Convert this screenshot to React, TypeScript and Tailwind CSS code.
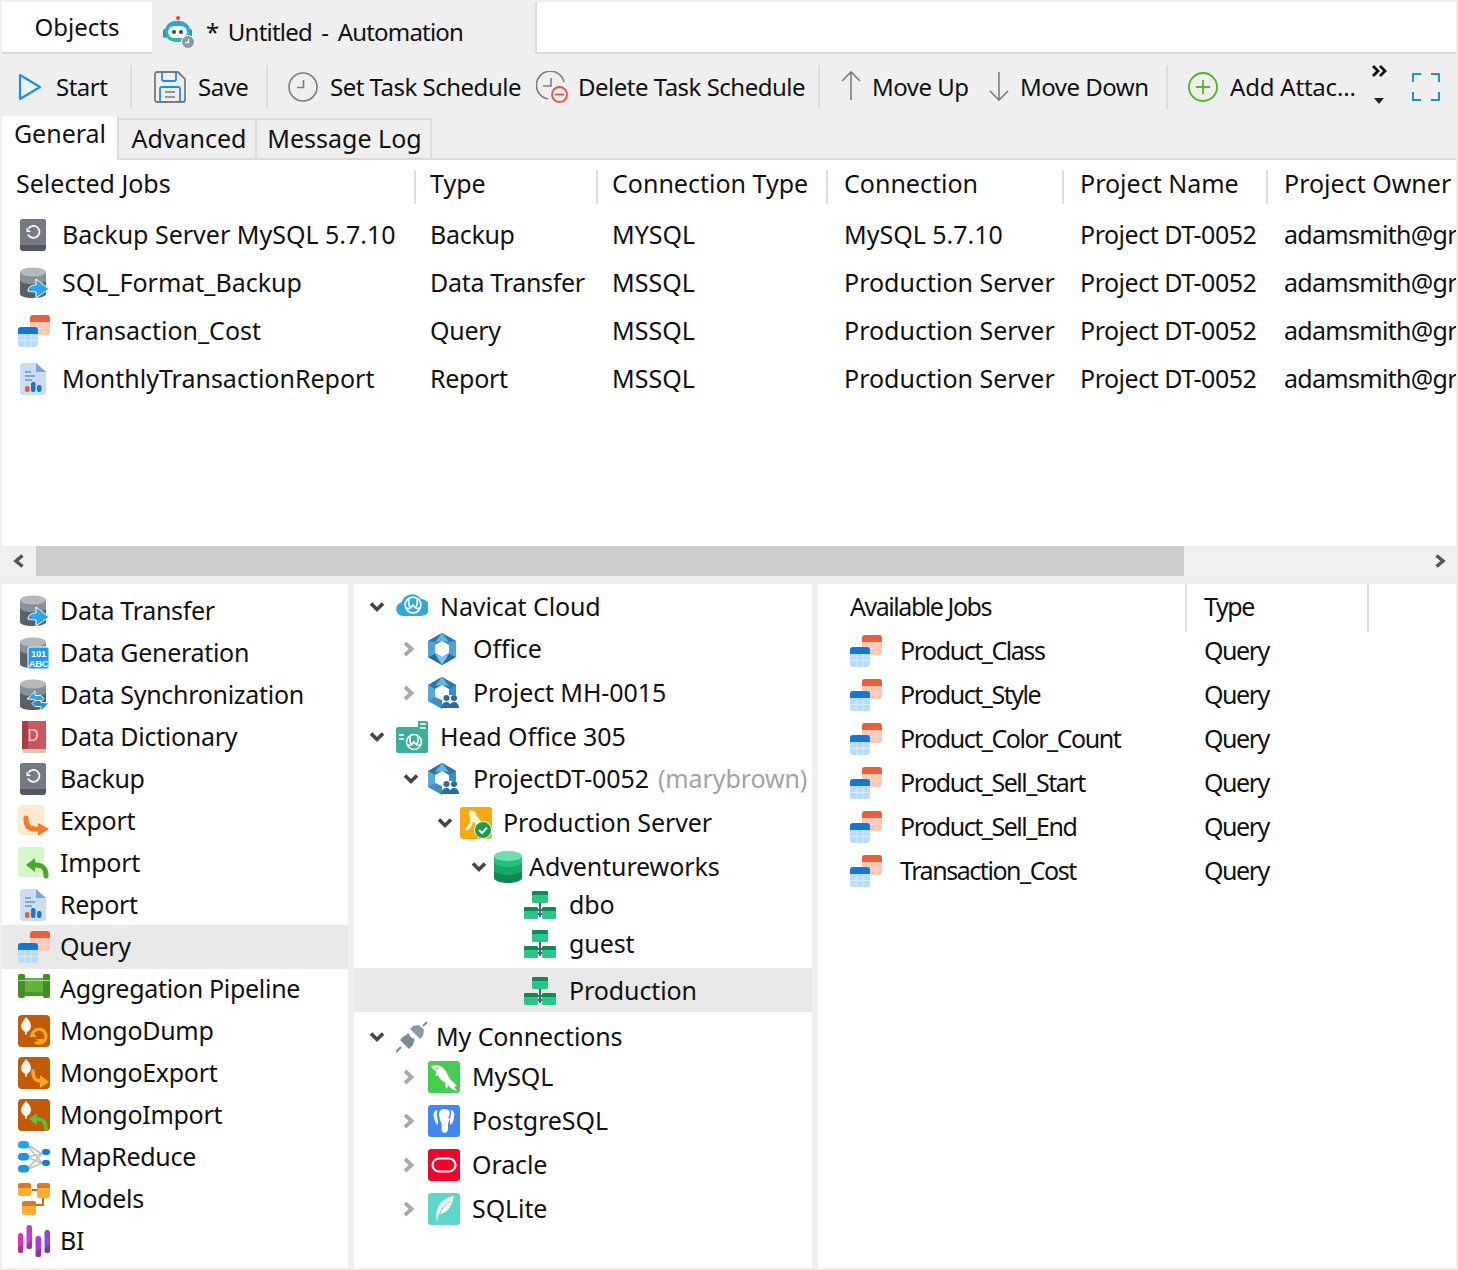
import React from "react";

type SP = { className?: string };
const S = ({ className = "w-8 h-8", children, vb = "0 0 32 32" }: { className?: string; children: React.ReactNode; vb?: string }) => (
  <svg viewBox={vb} className={`${className} shrink-0`} fill="none">{children}</svg>
);

const Query = () => (
  <S>
    <rect x="12" y="0" width="20" height="20" rx="3" fill="#fcc7b3" />
    <path d="M15 0h14a3 3 0 0 1 3 3v4H12V3a3 3 0 0 1 3-3z" fill="#e9603b" />
    <path d="M19 7v13M26 7v13M12 13.500h20" stroke="#fdd9cc" strokeWidth="1" />
    <rect x="0" y="12" width="20" height="20" rx="3" fill="#b9dcfb" />
    <path d="M3 12h14a3 3 0 0 1 3 3v4H0v-4a3 3 0 0 1 3-3z" fill="#1179d4" />
    <path d="M7 19v13M13 19v13M0 25.500h20" stroke="#d7ecfd" strokeWidth="1" />
  </S>
);
const BackupI = () => (
  <S>
    <rect x="2" y="0" width="26" height="32" rx="3" fill="#52585f" />
    <path d="M5 0h20a3 3 0 0 1 3 3v23H2V3a3 3 0 0 1 3-3z" fill="#737a83" />
    <path d="M10.500 9.500a6 6 0 1 1-.5 6" stroke="#fff" strokeWidth="1.800" />
    <path d="M8.500 8.500v4.500h4.500z" fill="#fff" />
  </S>
);
const Db = () => (
  <>
    <path d="M2 5v22c0 2.500 6 4 13 4s13-1.500 13-4V5z" fill="#5b6168" />
    <path d="M2 13c0 2.500 6 4 13 4s13-1.500 13-4V5H2z" fill="#8a9097" />
    <ellipse cx="15" cy="5" rx="13" ry="4.500" fill="#b4b9bf" />
  </>
);
const Transfer = () => (
  <S>
    <Db />
    <path d="M10 24c0-4 3-6 8-6v-6l13 10-13 9v-6c-3-.500-6 0-8-1z" fill="#2aa6ef" stroke="#fff" strokeWidth="1" />
  </S>
);
const GenI = () => (
  <S>
    <Db />
    <rect x="10" y="10" width="21" height="22" rx="2" fill="#1b9cf0" stroke="#fff" strokeWidth="1" />
    <text x="20.500" y="19.500" fontSize="9.500" fontWeight="700" textAnchor="middle" fill="#fff" fontFamily="Liberation Sans, sans-serif">101</text>
    <text x="20.500" y="29.500" fontSize="9.500" fontWeight="700" textAnchor="middle" fill="#fff" fontFamily="Liberation Sans, sans-serif">ABC</text>
  </S>
);
const SyncI = () => (
  <S>
    <Db />
    <path d="M9 20l8-8v4.500h6l3 3-3 3h-6v-2z" fill="#2aa6ef" stroke="#fff" strokeWidth="1" />
    <path d="M31 24l-8 8v-4.500h-6l-3-3 3-3h6v2z" fill="#1a8ee0" stroke="#fff" strokeWidth="1" />
  </S>
);
const DictI = () => (
  <S>
    <path d="M4 2a2 2 0 0 1 2-2h22v28H4z" fill="#c9585c" />
    <path d="M4 2a2 2 0 0 1 2-2h4v28H4z" fill="#a63f43" />
    <path d="M4 28h24v4H5z" fill="#d6c9b8" />
    <text x="15" y="20" fontSize="16" fill="#f7d5d5" textAnchor="middle" fontFamily="Noto Sans, sans-serif">D</text>
  </S>
);
const ExportI = () => (
  <S>
    <rect x="0" y="0" width="26" height="30" rx="4" fill="#fdebcf" />
    <path d="M8 13c0 8 2 11 10 11" stroke="#f47a24" strokeWidth="5" strokeLinecap="round" />
    <path d="M20 18l11 6-11 7z" fill="#f47a24" />
  </S>
);
const ImportI = () => (
  <S>
    <rect x="0" y="0" width="26" height="30" rx="4" fill="#d6f7cc" />
    <path d="M28 29c0-8-3-11-11-11" stroke="#4ca72f" strokeWidth="5" strokeLinecap="round" />
    <path d="M17 11L8 18l9 7z" fill="#4ca72f" />
  </S>
);
const ReportI = () => (
  <S>
    <path d="M5 0h13l10 9v20a3 3 0 0 1-3 3H5a3 3 0 0 1-3-3V3a3 3 0 0 1 3-3z" fill="#c9ddf3" />
    <path d="M18 0l10 9h-10z" fill="#7fa6cf" />
    <path d="M7 9h6M7 13h10M7 17h7" stroke="#7fa9d4" strokeWidth="1.800" />
    <rect x="7" y="23" width="4.500" height="6" rx="2" fill="#ef5a2a" />
    <rect x="13" y="19" width="4.500" height="10" rx="2" fill="#1776d0" />
    <rect x="19" y="22" width="4.500" height="7" rx="2" fill="#1776d0" />
  </S>
);
const AggI = () => (
  <S>
    <g transform="translate(0 1)">
      <rect x="5" y="4" width="22" height="18" fill="#5fb23c" />
      <rect x="5" y="18" width="22" height="4" fill="#4a9a2b" />
      <rect x="0" y="0" width="7" height="24" rx="2" fill="#3f8f22" />
      <rect x="25" y="0" width="7" height="24" rx="2" fill="#3f8f22" />
      <path d="M0 6.500h32" stroke="#a9d88f" strokeWidth="1" />
    </g>
  </S>
);
const MongoBase = ({ children }: { children: React.ReactNode }) => (
  <S>
    <rect width="32" height="32" rx="4" fill="#c25a07" />
    <path d="M8 2c3 3 5 6 5 9s-2 5-4 6l-.5 3h-1L7 17c-2-1-4-3-4-6s3-6 5-9z" fill="#fdf6ee" />
    {children}
  </S>
);
const DumpI = () => (
  <MongoBase>
    <path d="M14 22a7 7 0 1 1 3 5" stroke="#f9a81f" strokeWidth="3" />
    <path d="M11 22h8l-4-5z" fill="#f9a81f" />
    <path d="M18 24h8l-2 6z" fill="#f9a81f" />
  </MongoBase>
);
const MExportI = () => (
  <MongoBase>
    <path d="M15 14c0 7 2 10 8 10" stroke="#f9a81f" strokeWidth="3.500" strokeLinecap="round" />
    <path d="M22 18l9 7-9 6z" fill="#f9a81f" />
  </MongoBase>
);
const MImportI = () => (
  <MongoBase>
    <path d="M28 30c0-7-3-10-9-10" stroke="#5cc23c" strokeWidth="3.500" strokeLinecap="round" />
    <path d="M19 14l-8 6 8 6z" fill="#5cc23c" />
  </MongoBase>
);
const MapI = () => (
  <S>
    <path d="M8 3l16 10M8 3l16 19M8 16l16-3M8 16l16 6M8 29l16-16M8 29l16-7" stroke="#bcbcbc" strokeWidth="1.500" />
    <rect x="0" y="0" width="11" height="7.500" rx="3.500" fill="#22a5ec" />
    <rect x="0" y="12" width="11" height="7.500" rx="3.500" fill="#1d97e2" />
    <rect x="0" y="24" width="11" height="7.500" rx="3.500" fill="#1d97e2" />
    <rect x="24" y="8" width="8" height="6" rx="3" fill="#1080d4" />
    <rect x="24" y="19" width="8" height="6" rx="3" fill="#1080d4" />
  </S>
);
const ModelsI = () => (
  <S>
    <path d="M14 7h6M25 15v7H14" stroke="#c96a1c" strokeWidth="2" />
    <rect x="0" y="0" width="13" height="13" rx="2.500" fill="#fdae2e" />
    <path d="M2.500 0h8A2.500 2.500 0 0 1 13 2.500V5H0V2.500A2.500 2.500 0 0 1 2.500 0z" fill="#d9772a" />
    <rect x="19" y="0" width="13" height="15" rx="2.500" fill="#fdae2e" />
    <path d="M21.500 0h8A2.500 2.500 0 0 1 32 2.500V5H19V2.500A2.500 2.500 0 0 1 21.500 0z" fill="#d9772a" />
    <rect x="4" y="18" width="14" height="14" rx="2.500" fill="#fdae2e" />
    <path d="M6.500 18h9a2.500 2.500 0 0 1 2.500 2.500V23H4v-2.500A2.500 2.500 0 0 1 6.500 18z" fill="#d9772a" />
  </S>
);
const BiI = () => (
  <S>
    <rect x="0" y="8" width="5" height="20" rx="2.500" fill="#e22fb4" />
    <rect x="8.500" y="0" width="5.500" height="24" rx="2.500" fill="#cb39cd" />
    <rect x="17.500" y="11" width="5.500" height="21" rx="2.500" fill="#b038d9" />
    <rect x="26.500" y="5" width="5.500" height="23" rx="2.500" fill="#8d45dc" />
    <path d="M0 24l5-5v9H0zM8.500 20l5.500-5v9h-5.500zM17.500 28l5.500-5v9h-5.500zM26.500 24l5.500-5v9h-5.500z" fill="#00000030" />
  </S>
);
const NavLogo = ({ stroke = "#fff", x = 0, y = 0, s = 1 }: { stroke?: string; x?: number; y?: number; s?: number }) => (
  <g transform={`translate(${x} ${y}) scale(${s})`} stroke={stroke} strokeWidth="1.600">
    <circle cx="0" cy="0" r="7.500" />
    <path d="M-3 -7.200c-1.500 3-1.500 6 0 9M3 -7.200c1.500 3 1.500 6 0 9M-6.800 2.500c2.500 2 4.800 .5 6.800-2.500 2 3 4.300 4.500 6.800 2.500" />
  </g>
);
const CloudI = () => (
  <S>
    <path d="M7 25a7 7 0 0 1-1.500-13.800A11 11 0 0 1 25 8a8.500 8.500 0 0 1 0 17z" fill="#2ea8dd" />
    <NavLogo x={17} y={14} s={1.050} />
  </S>
);
const HexI = () => (
  <S className="w-7 h-8" vb="0 0 28 32">
    <path d="M14 0l14 8v16l-14 8-14-8V8z" fill="#3c8fc6" />
    <path d="M14 0l14 8-7 1-7-1-7 1-7-1z" fill="#2c76ad" />
    <path d="M0 24l7-3 7 3 7-3 7 3-14 8z" fill="#1f6ea8" />
    <path d="M14 0L7 9l7-1zM14 0l7 9-7-1z" fill="#66b4e2" />
    <path d="M28 8v16l-7-3V9zM0 8v16l7-3V9z" fill="#4fa2d8" />
    <path d="M14 24l-7-3 7 11zM14 24l7-3-7 11z" fill="#7cc3ec" />
    <path d="M14 8l7 4v8l-7 4-7-4v-8z" fill="#fff" />
  </S>
);
const ProjI = () => (
  <S>
    <path d="M14 0l14 8v10H20l-6 5v9l-14-8V8z" fill="#3c8fc6" />
    <path d="M14 0l14 8-7 4-7-4-7 4-7-4z" fill="#2c76ad" />
    <path d="M14 0L7 9l7-1zM14 0l7 9-7-1z" fill="#66b4e2" />
    <path d="M14 8l7 4v6l-4 2-3 3-7-3v-8z" fill="#fff" />
    <path d="M0 8v16l7-4v-8z" fill="#58a9dc" />
    <circle cx="18.500" cy="21" r="3" fill="#2b6c9e" />
    <circle cx="26" cy="21" r="3" fill="#2b6c9e" />
    <path d="M13.500 31c0-4 2-6 5-6s4 2 4 6zM21.500 31c0-4 2-6 4.500-6s5 2 5 6z" fill="#2b6c9e" />
  </S>
);
const HeadI = () => (
  <S>
    <path d="M22 0h8a2 2 0 0 1 2 2v28a2 2 0 0 1-2 2H2a2 2 0 0 1-2-2V8a2 2 0 0 1 2-2h20z" fill="#3bae9c" />
    <path d="M24 3h6M24 7h6M3 14h5M3 18h5" stroke="#fff" strokeWidth="1.500" />
    <NavLogo x={18} y={21} s={1} />
  </S>
);
const ProdI = () => (
  <S>
    <rect width="32" height="32" rx="3" fill="#fba90f" />
    <path d="M9 3c5 0 8 2 8 6 3 2 6 8 6 15l-6 2c0-5-1-9-4-11 0 4-2 7-6 9l-3-2c4-3 6-7 6-10-1-3-2-6-1-9z" fill="#fff3cc" stroke="#c97b00" strokeWidth=".6" strokeDasharray="1 1" />
    <circle cx="23" cy="23" r="8.500" fill="#1a9d4b" stroke="#fff" strokeWidth="1" />
    <path d="M19 23l3 3 5-5.500" stroke="#fff" strokeWidth="2" />
  </S>
);
const GreenDb = () => (
  <S className="w-7 h-8" vb="0 0 28 32">
    <path d="M0 5v22c0 2.800 6.300 5 14 5s14-2.200 14-5V5z" fill="#0d8a51" />
    <path d="M0 5v14c0 2.800 6.300 5 14 5s14-2.200 14-5V5z" fill="#17a764" />
    <path d="M0 5v6c0 2.800 6.300 5 14 5s14-2.200 14-5V5z" fill="#24c37c" />
    <ellipse cx="14" cy="5" rx="14" ry="5" fill="#6fe0ad" />
  </S>
);
const SchemaI = () => (
  <S>
    <g transform="translate(0 2)">
      <path d="M16 12v14M9 19h14M12 23h8" stroke="#47647c" strokeWidth="2" />
      <rect x="8" y="0" width="16" height="12" rx="1.500" fill="#2cc583" />
      <path d="M9.500 0h13A1.500 1.500 0 0 1 24 1.500V4H8V1.500A1.500 1.500 0 0 1 9.500 0z" fill="#0c8b55" />
      <rect x="0" y="16" width="14" height="12" rx="1.500" fill="#2cc583" />
      <path d="M1.500 16h11a1.500 1.500 0 0 1 1.500 1.500V20H0v-2.500A1.500 1.500 0 0 1 1.500 16z" fill="#0c8b55" />
      <rect x="18" y="16" width="14" height="12" rx="1.500" fill="#2cc583" />
      <path d="M19.500 16h11a1.500 1.500 0 0 1 1.500 1.500V20H18v-2.500a1.500 1.500 0 0 1 1.500-1.500z" fill="#0c8b55" />
    </g>
  </S>
);
const PlugI = () => (
  <S>
    <path d="M0 31l5-5" stroke="#5d93bd" strokeWidth="2" />
    <path d="M4 19l9 9 4-4 1-5-5-5-5 1z" fill="#7d8b99" />
    <path d="M10 16l3-3M15 21l3-3" stroke="#7d8b99" strokeWidth="2.500" />
    <path d="M14 8l10 10 3-3 1-6-5-5-6 1z" fill="#8d99a5" />
    <path d="M27 5l4-4" stroke="#5d93bd" strokeWidth="2" />
  </S>
);
const MysqlI = () => (
  <S>
    <rect width="32" height="32" rx="3" fill="#46cc4e" />
    <path d="M3 5c6-2 11 0 14 4 3 4 4 9 8 12l4 4-3 .5 3 4.500c-4-1-7-3-9-6l-1 4c-2-2-2-5-2-7-4-1-6-4-7-7-1 1-2 1-3 0 1-1 2-2 1-4-2-1-4-3-5-5z" fill="#fff" />
    <circle cx="9" cy="7.500" r=".9" fill="#46cc4e" />
  </S>
);
const PgI = () => (
  <S>
    <rect width="32" height="32" rx="3" fill="#4186f5" />
    <path d="M16 4c5 0 7 3 6.500 8-.5 3-2.500 5-2.500 8 0 3 .5 8-3.500 8-3.500 0-3-5-3-8 0-3-2-5-2.500-8-.5-5 1-8 5-8z" fill="#fff" />
    <path d="M10 5C6 5 5 8 6 13c.5 3 2 6 3.500 7 1-2 .5-5 0-7-.5-3-1-6 .5-8zM22 5c4 0 5 3 4 8-.5 3-2 6-3.500 7-1-2-.5-5 0-7 .5-3 1-6-.5-8z" fill="#fff" />
    <path d="M10 5.500c-.5 3 0 6 1.500 8M22 5.500c.5 3 0 6-1.500 8" stroke="#4186f5" strokeWidth="1.200" />
  </S>
);
const OracleI = () => (
  <S>
    <rect width="32" height="32" rx="3" fill="#f0042c" />
    <rect x="4.500" y="9.500" width="23" height="13" rx="6.500" stroke="#fff" strokeWidth="2.200" />
  </S>
);
const SqliteI = () => (
  <S>
    <rect width="32" height="32" rx="3" fill="#5dd6cc" />
    <path d="M26 3c-8 1-15 6-17 14-1 4-1 8 0 12h1c0-3 1-6 2-8 6-1 11-5 14-18z" fill="#fff" />
    <path d="M9 31c1-10 6-18 13-23" stroke="#5dd6cc" strokeWidth="1" />
  </S>
);
const RobotI = () => (
  <S>
    <path d="M15 5V2" stroke="#9aa" strokeWidth="1.500" />
    <circle cx="15" cy="2" r="2" fill="#e8443a" />
    <rect x="0" y="13" width="4" height="9" rx="2" fill="#1d9bb8" />
    <rect x="25" y="13" width="4" height="9" rx="2" fill="#1d9bb8" />
    <rect x="2" y="5" width="25" height="21" rx="10" fill="#2fb8a8" />
    <path d="M2 15a12.500 10 0 0 1 25 0z" fill="#2aa5d6" />
    <rect x="5" y="10" width="19" height="12" rx="6" fill="#eef8fb" />
    <circle cx="11" cy="16" r="2" fill="#2c4a66" />
    <circle cx="18" cy="16" r="2" fill="#2c4a66" />
    <circle cx="25" cy="26" r="6.500" fill="#8b98a5" stroke="#fff" strokeWidth="1" />
    <path d="M25.500 23v3.500H22" stroke="#fff" strokeWidth="1.300" />
  </S>
);
const Chev = ({ d }: { d: "down" | "right" }) =>
  d === "down" ? (
    <svg viewBox="0 0 16 12" className="w-4 h-3 shrink-0" fill="none"><path d="M2 2.500l6 6 6-6" stroke="#444" strokeWidth="3.600" /></svg>
  ) : (
    <svg viewBox="0 0 12 16" className="w-3 h-4 shrink-0" fill="none"><path d="M2 2l6.500 6L2 14" stroke="#a9a9a9" strokeWidth="3.800" /></svg>
  );

const Sep = ({ className }: SP) => <div className={`w-[2px] h-[44px] bg-[#dcdcdc] shrink-0 ${className}`} />;

const Toolbar = () => (
  <div className="h-[62px] flex items-center text-[24px] tracking-[-0.5px] text-[#111] shrink-0 pt-[4px] bg-[#efefef]">
    <svg viewBox="0 0 24 28" className="w-[24px] h-[28px] ml-[16px] shrink-0" fill="none"><path d="M2 2l20 12L2 26z" stroke="#1c8fe6" strokeWidth="2.200" strokeLinejoin="round" /></svg>
    <span className="ml-[14px] w-[50px]">Start</span>
    <Sep className="ml-[24px]" />
    <svg viewBox="0 0 32 32" className="w-8 h-8 ml-[22px] shrink-0" fill="none">
      <path d="M3 1h21l7 7v21a2 2 0 0 1-2 2H3a2 2 0 0 1-2-2V3a2 2 0 0 1 2-2z" stroke="#7a7a7a" strokeWidth="1.800" />
      <path d="M8 1v7a2 2 0 0 0 2 2h10a2 2 0 0 0 2-2V1" stroke="#1c8fe6" strokeWidth="1.800" />
      <path d="M6 31V18a2 2 0 0 1 2-2h16a2 2 0 0 1 2 2v13" stroke="#1c8fe6" strokeWidth="1.800" />
      <path d="M11 21h10M11 26h10" stroke="#7a7a7a" strokeWidth="1.500" />
    </svg>
    <span className="ml-[12px] w-[49px]">Save</span>
    <Sep className="ml-[19px]" />
    <svg viewBox="0 0 30 30" className="w-[30px] h-[30px] ml-[20px] shrink-0" fill="none">
      <circle cx="15" cy="15" r="14" stroke="#7d7d7d" strokeWidth="1.600" />
      <path d="M15.500 8v7.500H9" stroke="#7d7d7d" strokeWidth="1.600" />
    </svg>
    <span className="ml-[12px] w-[191px] whitespace-nowrap">Set Task Schedule</span>
    <svg viewBox="0 0 32 32" className="w-8 h-8 ml-[15px] shrink-0" fill="none">
      <path d="M28 11A14 14 0 1 0 12 28" stroke="#7d7d7d" strokeWidth="1.600" />
      <path d="M15 7v8H7" stroke="#7d7d7d" strokeWidth="1.600" />
      <circle cx="23.500" cy="23.500" r="7.500" stroke="#ee4d3d" strokeWidth="1.800" fill="#efefef" />
      <path d="M19 23.500h9" stroke="#ee4d3d" strokeWidth="1.800" />
    </svg>
    <span className="ml-[10px] w-[226px] whitespace-nowrap">Delete Task Schedule</span>
    <Sep className="ml-[14px]" />
    <svg viewBox="0 0 22 30" className="w-[22px] h-[30px] ml-[20px] mb-[4px] shrink-0" fill="none"><path d="M11 30V2M2 11l9-9 9 9" stroke="#7d7d7d" strokeWidth="1.600" /></svg>
    <span className="ml-[10px] w-[98px] whitespace-nowrap">Move Up</span>
    <svg viewBox="0 0 22 30" className="w-[22px] h-[30px] ml-[18px] shrink-0" fill="none"><path d="M11 0v28M2 19l9 9 9-9" stroke="#7d7d7d" strokeWidth="1.600" /></svg>
    <span className="ml-[10px] w-[130px] whitespace-nowrap">Move Down</span>
    <Sep className="ml-[16px]" />
    <svg viewBox="0 0 30 30" className="w-[30px] h-[30px] ml-[20px] shrink-0" fill="none">
      <circle cx="15" cy="15" r="14" stroke="#4cb71c" strokeWidth="1.800" />
      <path d="M15 8v14M8 15h14" stroke="#4cb71c" strokeWidth="1.800" />
    </svg>
    <span className="ml-[12px] w-[125px] whitespace-nowrap tracking-[-0.2px]">Add Attac...</span>
    <div className="ml-[15px] w-[18px] h-[39px] mb-[5px] flex flex-col items-center justify-between shrink-0">
      <svg viewBox="0 0 16 12" className="w-4 h-3" fill="none"><path d="M2 1l5 5-5 5M9 1l5 5-5 5" stroke="#111" strokeWidth="2.800" /></svg>
      <svg viewBox="0 0 10 6" className="w-[10px] h-[6px]"><path d="M0 0h10L5 6z" fill="#222" /></svg>
    </div>
    <svg viewBox="0 0 28 28" className="w-[28px] h-[28px] ml-[24px] shrink-0" fill="none"><path d="M1 9V1h8M19 1h8v8M27 19v8h-8M9 27H1v-8" stroke="#1c8fe6" strokeWidth="2" /></svg>
  </div>
);

const cols = "grid grid-cols-[412px_182px_230px_236px_204px_200px]";
const Cell = ({ className = "", children }: { className?: string; children: React.ReactNode }) => (
  <div className={`flex items-center whitespace-nowrap overflow-hidden ${className}`}>{children}</div>
);

const jobs: [React.ReactNode, string, string, string, string][] = [
  [<BackupI />, "Backup Server MySQL 5.7.10", "Backup", "MYSQL", "MySQL 5.7.10"],
  [<Transfer />, "SQL_Format_Backup", "Data Transfer", "MSSQL", "Production Server"],
  [<Query />, "Transaction_Cost", "Query", "MSSQL", "Production Server"],
  [<ReportI />, "MonthlyTransactionReport", "Report", "MSSQL", "Production Server"],
];

const heads: [string, string][] = [
  ["Selected Jobs", "pl-[14px]"],
  ["Type", "pl-[14px] border-l-2 border-[#dedede]"],
  ["Connection Type", "pl-[14px] border-l-2 border-[#dedede]"],
  ["Connection", "pl-[16px] border-l-2 border-[#dedede]"],
  ["Project Name", "pl-[16px] border-l-2 border-[#dedede]"],
  ["Project Owner", "pl-[16px] border-l-2 border-[#dedede]"],
];

const JobsTable = () => (
  <div className="h-[386px] bg-white overflow-hidden shrink-0 text-[25px] text-[#111]">
    <div className={`${cols} h-[51px] pt-[10px] items-start`}>
      {heads.map(([h, c]) => (
        <div key={h} className={`h-[34px] flex items-center whitespace-nowrap pb-[6px] ${c}`}>{h}</div>
      ))}
    </div>
    {jobs.map((j) => (
      <div key={String(j[1])} className={`${cols} h-[48px]`}>
        <Cell className="pl-[16px] gap-[12px]">{j[0]}<span>{j[1]}</span></Cell>
        <Cell className="pl-[16px] tracking-[-0.3px]">{j[2]}</Cell>
        <Cell className="pl-[16px]">{j[3]}</Cell>
        <Cell className="pl-[18px]">{j[4]}</Cell>
        <Cell className="pl-[18px] tracking-[-0.5px]">Project DT-0052</Cell>
        <Cell className="pl-[18px] tracking-[-0.7px]">adamsmith@gr</Cell>
      </div>
    ))}
  </div>
);

const tools: [React.ReactNode, string, boolean?][] = [
  [<Transfer />, "Data Transfer"],
  [<GenI />, "Data Generation"],
  [<SyncI />, "Data Synchronization"],
  [<DictI />, "Data Dictionary"],
  [<BackupI />, "Backup"],
  [<ExportI />, "Export"],
  [<ImportI />, "Import"],
  [<ReportI />, "Report"],
  [<Query />, "Query", true],
  [<AggI />, "Aggregation Pipeline"],
  [<DumpI />, "MongoDump"],
  [<MExportI />, "MongoExport"],
  [<MImportI />, "MongoImport"],
  [<MapI />, "MapReduce"],
  [<ModelsI />, "Models"],
  [<BiI />, "BI"],
];

const TreeRow = ({ className, chev, chevBox, icon, iconBox, text, extra, gap }: { className: string; chev?: "down" | "right"; chevBox: string; icon: React.ReactNode; iconBox: string; text: string; extra?: string; gap: string }) => (
  <div className={`flex items-center whitespace-nowrap ${className}`}>
    <span className={`flex items-center shrink-0 ${chevBox}`}>{chev && <Chev d={chev} />}</span>
    <span className={`flex shrink-0 ${iconBox}`}>{icon}</span>
    <span className={gap}>{text}</span>
    {extra && <span className="ml-[9px] text-[#a3a3a3]">{extra}</span>}
  </div>
);

const Tree = () => (
  <div className="w-[458px] bg-white text-[25px] tracking-[-0.1px] text-[#111] overflow-hidden pt-[2px] shrink-0">
    <TreeRow className="h-[42px] pl-[15px]" chev="down" chevBox="w-[27px]" icon={<CloudI />} iconBox="w-[32px]" gap="ml-[12px]" text="Navicat Cloud" />
    <TreeRow className="h-[42px] pl-[49px]" chev="right" chevBox="w-[25px]" icon={<HexI />} iconBox="w-[32px]" gap="ml-[13px]" text="Office" />
    <TreeRow className="h-[46px] pl-[49px]" chev="right" chevBox="w-[25px]" icon={<ProjI />} iconBox="w-[32px]" gap="ml-[13px]" text="Project MH-0015" />
    <TreeRow className="h-[42px] pl-[15px]" chev="down" chevBox="w-[27px]" icon={<HeadI />} iconBox="w-[32px]" gap="ml-[12px]" text="Head Office 305" />
    <TreeRow className="h-[42px] pl-[49px]" chev="down" chevBox="w-[25px]" icon={<ProjI />} iconBox="w-[32px]" gap="ml-[13px]" text="ProjectDT-0052" extra="(marybrown)" />
    <TreeRow className="h-[46px] pl-[83px]" chev="down" chevBox="w-[23px]" icon={<ProdI />} iconBox="w-[32px]" gap="ml-[11px]" text="Production Server" />
    <TreeRow className="h-[42px] pl-[117px]" chev="down" chevBox="w-[23px]" icon={<GreenDb />} iconBox="w-[28px]" gap="ml-[7px]" text="Adventureworks" />
    <TreeRow className="h-[34px] pl-[170px]" chevBox="w-0" icon={<SchemaI />} iconBox="w-[32px]" gap="ml-[13px]" text="dbo" />
    <TreeRow className="h-[44px] pl-[170px]" chevBox="w-0" icon={<SchemaI />} iconBox="w-[32px]" gap="ml-[13px]" text="guest" />
    <TreeRow className="h-[44px] pl-[170px] pt-[2px] box-border mt-[2px] bg-[#e9e9e9]" chevBox="w-0" icon={<SchemaI />} iconBox="w-[32px]" gap="ml-[13px]" text="Production" />
    <TreeRow className="h-[43px] pt-[6px] box-border pl-[15px]" chev="down" chevBox="w-[27px]" icon={<PlugI />} iconBox="w-[32px]" gap="ml-[8px]" text="My Connections" />
    <TreeRow className="h-[44px] pl-[49px]" chev="right" chevBox="w-[25px]" icon={<MysqlI />} iconBox="w-[32px]" gap="ml-[12px]" text="MySQL" />
    <TreeRow className="h-[44px] pl-[49px]" chev="right" chevBox="w-[25px]" icon={<PgI />} iconBox="w-[32px]" gap="ml-[12px]" text="PostgreSQL" />
    <TreeRow className="h-[44px] pl-[49px]" chev="right" chevBox="w-[25px]" icon={<OracleI />} iconBox="w-[32px]" gap="ml-[12px]" text="Oracle" />
    <TreeRow className="h-[44px] pl-[49px]" chev="right" chevBox="w-[25px]" icon={<SqliteI />} iconBox="w-[32px]" gap="ml-[12px]" text="SQLite" />
  </div>
);

const avail = ["Product_Class", "Product_Style", "Product_Color_Count", "Product_Sell_Start", "Product_Sell_End", "Transaction_Cost"];

export default function App() {
  return (
    <div className="w-[1458px] h-[1270px] bg-[#efefef] p-[2px] flex flex-col overflow-hidden font-['Noto_Sans',sans-serif]">
      <div className="h-[52px] flex shrink-0 text-[24px] text-[#111]">
        <div className="w-[150px] h-[50px] bg-white border-b-2 border-[#dcdcdc] flex items-center justify-center box-content">
          Objects
        </div>
        <div className="w-[383px] flex items-center pl-[11px] pt-[8px] gap-[11px] whitespace-pre">
          <RobotI />
          <span className="tracking-[-0.8px] [word-spacing:4px]">* Untitled - Automation</span>
        </div>
        <div className="flex-1 h-[52px] bg-white border-b-2 border-l-2 border-[#dcdcdc]" />
      </div>
      <Toolbar />
      <div className="h-[44px] flex items-end shrink-0 text-[25px] text-[#111] border-b-2 border-[#d9d9d9]">
        <div className="w-[117px] h-[44px] -mb-[2px] bg-white flex items-center justify-center border-r-2 border-[#dcdcdc] pb-[8px] pl-[1px]">General</div>
        <div className="w-[138px] h-[40px] flex items-center justify-center border-r-2 border-t-2 border-[#dcdcdc] pl-[4px]">Advanced</div>
        <div className="w-[175px] h-[40px] flex items-center justify-center border-r-2 border-t-2 border-[#dcdcdc] pl-[2px]">Message Log</div>
      </div>
      <JobsTable />
      <div className="h-[30px] flex bg-[#f0f0f0] shrink-0">
        <div className="w-[34px] flex items-center justify-center">
          <svg viewBox="0 0 12 14" className="w-3 h-[14px]" fill="none"><path d="M9.500 1.500L3 7l6.500 5.500" stroke="#555" strokeWidth="3.500" /></svg>
        </div>
        <div className="w-[1148px] bg-[#cdcdcd]" />
        <div className="flex-1 flex items-center justify-end pr-[10px]">
          <svg viewBox="0 0 12 14" className="w-3 h-[14px]" fill="none"><path d="M2.500 1.500L9 7l-6.500 5.500" stroke="#555" strokeWidth="3.500" /></svg>
        </div>
      </div>
      <div className="h-[684px] mt-[8px] flex gap-[6px] shrink-0">
        <div className="w-[346px] bg-white text-[25px] tracking-[-0.3px] text-[#111] pt-[6px] shrink-0">
          {tools.map(([ic, t, sel]) => (
            <div key={t} className={`flex items-center pl-[16px] gap-[10px] whitespace-nowrap ${sel ? "h-[44px] -my-[1px] bg-[#e9e9e9]" : "h-[42px]"}`}>
              {ic}
              <span>{t}</span>
            </div>
          ))}
        </div>
        <Tree />
        <div className="flex-1 bg-white text-[25px] text-[#111] tracking-[-1.45px]">
          <div className="grid grid-cols-[369px_182px] h-[48px]">
            <div className="flex items-center pl-[32px] pb-[2px] border-r-2 border-[#dedede]">Available Jobs</div>
            <div className="flex items-center pl-[17px] pb-[2px] border-r-2 border-[#dedede]">Type</div>
          </div>
          <div className="-mt-[3px]">
            {avail.map((a) => (
              <div key={a} className="grid grid-cols-[369px_182px] h-[44px]">
                <div className="flex items-center pl-[32px] gap-[18px] whitespace-nowrap"><Query /><span>{a}</span></div>
                <div className="flex items-center pl-[17px]">Query</div>
              </div>
            ))}
          </div>
        </div>
      </div>
    </div>
  );
}
